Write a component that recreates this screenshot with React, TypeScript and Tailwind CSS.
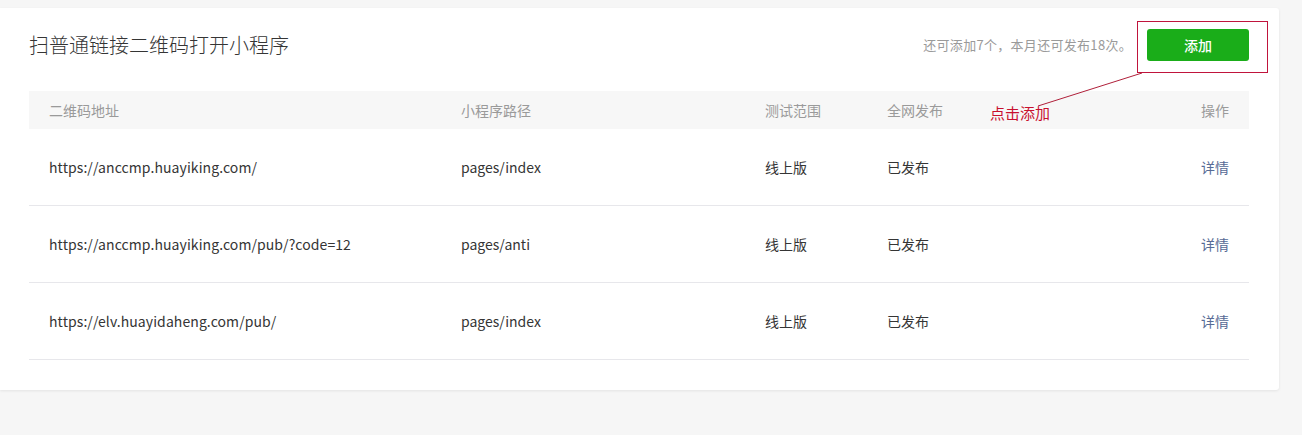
const rows = [
  { url: "https://anccmp.huayiking.com/", path: "pages/index", range: "线上版", status: "已发布" },
  { url: "https://anccmp.huayiking.com/pub/?code=12", path: "pages/anti", range: "线上版", status: "已发布" },
  { url: "https://elv.huayidaheng.com/pub/", path: "pages/index", range: "线上版", status: "已发布" },
];

const cols = "grid grid-cols-[412px_304px_122px_1fr_120px] items-center";

export default function App() {
  return (
    <div
      className="relative min-h-[435px] bg-[#f6f6f6] pt-2"
      style={{ fontFamily: '"Noto Sans CJK SC", "Noto Sans", sans-serif' }}
    >
      <div className="w-[1279px] rounded-r-[3px] bg-white pb-[30px] pl-[29px] pr-[30px] pt-[21px] shadow-[0_1px_3px_rgba(0,0,0,0.08)]">
        <div className="flex h-8 items-center justify-between">
          <h1 className="text-[20px] font-light leading-none text-[#353535]">扫普通链接二维码打开小程序</h1>
          <div className="flex items-center">
            <span className="mr-[15px] text-[13px] tracking-[0.3px] text-[#9a9a9a]">还可添加7个，本月还可发布18次。</span>
            <button className="h-8 w-[102px] rounded-[3px] bg-[#1aad19] text-[14px] font-medium text-white">
              添加
            </button>
          </div>
        </div>

        <div className="mt-[30px] text-[14px]">
          <div className={`${cols} h-[38px] bg-[#f7f7f7] text-[#9a9a9a]`}>
            <div className="pl-5">二维码地址</div>
            <div className="pl-5">小程序路径</div>
            <div className="pl-5">测试范围</div>
            <div className="pl-5">全网发布</div>
            <div className="pr-5 text-right">操作</div>
          </div>
          {rows.map((r) => (
            <div key={r.url} className={`${cols} h-[77px] border-b border-[#e7e7eb] text-[#353535]`}>
              <div className="pl-5 tracking-[0.08px]">{r.url}</div>
              <div className="pl-5">{r.path}</div>
              <div className="pl-5">{r.range}</div>
              <div className="pl-5">{r.status}</div>
              <div className="pr-5 text-right">
                <a className="text-[#576b95]" href="#">详情</a>
              </div>
            </div>
          ))}
        </div>
      </div>

      {/* annotation overlay */}
      <svg className="pointer-events-none absolute left-0 top-0" width="1302" height="435">
        <rect x="1137.5" y="21.5" width="130" height="51" fill="none" stroke="#c0143c" strokeWidth="1" />
        <line x1="1142" y1="73" x2="1038" y2="106" stroke="#b0203a" strokeWidth="1" />
      </svg>
      <span className="absolute left-[990px] top-[102px] text-[15px] text-[#c8102e]">点击添加</span>
    </div>
  );
}
